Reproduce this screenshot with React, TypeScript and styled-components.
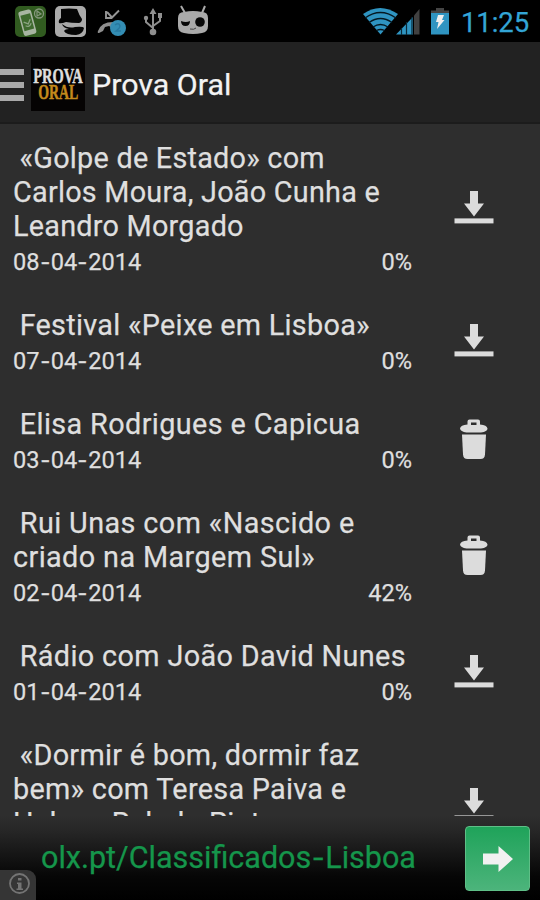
import React from "react";
import styled, { createGlobalStyle } from "styled-components";

const GlobalStyle = createGlobalStyle`
  * { box-sizing: border-box; }
  body { margin: 0; background: #000; font-family: Roboto, "Liberation Sans", sans-serif; }
`;

const Screen = styled.main`
  display: flex;
  flex-direction: column;
  width: 540px;
  height: 900px;
  overflow: hidden;
  background: #2e2e2e;
  -webkit-text-stroke: 0.25px currentColor;
`;

const StatusBar = styled.div`
  display: flex;
  flex: none;
  justify-content: space-between;
  height: 42px;
  background: #000;
  svg { display: block; flex: none; }
`;

const StatusRight = styled.div`
  display: flex;
`;

const Clock = styled.span`
  width: 79px;
  font-size: 27.5px;
  line-height: 46px;
  letter-spacing: -0.1px;
  color: #33a5d6;
  white-space: nowrap;
`;

const ActionBar = styled.header`
  display: flex;
  flex: none;
  align-items: center;
  height: 82px;
  background: #222;
  border-bottom: 2px solid #1c1c1c;
`;

const MenuBars = styled.div`
  display: flex;
  flex-direction: column;
  gap: 7px;
  width: 24px;
  margin-top: 6px;
`;

const MenuBar = styled.span`
  height: 6px;
  background: #a9a9a9;
`;

const Logo = styled.div`
  display: flex;
  flex-direction: column;
  align-items: center;
  justify-content: center;
  width: 54px;
  height: 54px;
  margin: 3px 7px 0 7px;
  background: #050303;
  font-family: "Liberation Serif", serif;
  font-weight: 700;
  line-height: 16px;
`;

const LogoWord = styled.span<{ $gold?: boolean }>`
  font-size: 21px;
  color: ${(p) => (p.$gold ? "#c48a1c" : "#dedede")};
  transform: scaleX(${(p) => (p.$gold ? 0.66 : 0.69)});
  -webkit-text-stroke-width: 0.5px;
  white-space: nowrap;
`;

const AppTitle = styled.h1`
  margin: 4px 0 0;
  font-size: 30.4px;
  font-weight: 400;
  color: #f3f3f3;
`;

const List = styled.ul`
  flex: none;
  height: 692px;
  margin: 0;
  padding: 0;
  overflow: hidden;
  list-style: none;
`;

const Row = styled.li`
  display: flex;
  align-items: center;
  justify-content: space-between;
  padding: 17px 45px 15px 13px;
  color: #dfdfdf;
`;

const Details = styled.div`
  width: 399px;
`;

const EpisodeTitle = styled.div<{ $tracking: number }>`
  font-size: 28.8px;
  line-height: 34px;
  letter-spacing: ${(p) => p.$tracking}px;
  text-indent: -0.8px;
  white-space: pre;
`;

const Meta = styled.div`
  display: flex;
  justify-content: space-between;
  margin-top: 5px;
  font-size: 23.6px;
  line-height: 28px;
`;

const Dash = styled.span<{ $wide?: boolean }>`
  display: inline-block;
  margin: 0 ${(p) => (p.$wide ? 2.8 : 2.3)}px;
  transform: scaleX(1.25);
`;

const IconButton = styled.button`
  display: block;
  width: 42px;
  height: 44px;
  margin-bottom: 2px;
  padding: 0;
  border: 0;
  background: none;
  svg { display: block; }
`;

const AdBanner = styled.footer`
  display: flex;
  position: relative;
  flex: none;
  align-items: flex-start;
  justify-content: space-between;
  height: 84px;
  padding: 10px 10px 0 41px;
  background: linear-gradient(#2e2e2e 0%, #252525 20%, #060606 72%, #000 100%);
`;

const AdText = styled.span`
  font-size: 30.5px;
  line-height: 64px;
  color: #15964b;
  white-space: nowrap;
`;

const AdButton = styled.button`
  display: flex;
  align-items: center;
  justify-content: center;
  width: 65px;
  height: 65px;
  padding: 0;
  border: 1.5px solid #5fbf87;
  border-radius: 4px;
  background: linear-gradient(#1fa35a, #4cb47b);
`;

const AdInfo = styled.div`
  position: absolute;
  left: 0;
  bottom: 0;
  width: 36px;
  height: 30px;
  border-radius: 0 9px 0 0;
  background: #353535;
`;

const DownloadIcon = () => (
  <svg width="42" height="44" viewBox="0 0 42 44">
    <path d="M17 5h8V17.500h6L21 30.500 11 17.500h6z" fill="#dcdcdc" />
    <rect x="1.500" y="32.400" width="39" height="5" fill="#dcdcdc" />
  </svg>
);

const TrashIcon = () => (
  <svg width="42" height="44" viewBox="0 0 42 44">
    <path
      fillRule="evenodd"
      d="M14.500 6.500V3.500q0-2 2-2h8.500q2 0 2 2v3q7 .7 7.500 4Q34.500 13.500 28 14.500H13.500q-6-1-6.500-4Q7.500 7.200 14.500 6.500zM18 4.500v2.500h5.500V4.500z"
      fill="#dcdcdc"
    />
    <path d="M9 16.500h24l-1 20q-.3 4.500-4.500 4.500h-13q-4.200 0-4.500-4.500z" fill="#dcdcdc" />
  </svg>
);

const NotificationIcons = () => (
  <svg width="220" height="42" viewBox="0 0 220 42">
    <rect x="15" y="6" width="31" height="31" rx="5" fill="#315b20" />
    <g transform="rotate(-15 28 23)">
      <rect x="21" y="10" width="13" height="25" rx="2.500" fill="#a8b5a2" />
      <rect x="22.500" y="14" width="10" height="16" fill="#3e6a2e" />
      <path d="M24 21l4 3 3-4M25 25q3 3 6-1" fill="none" stroke="#8ba482" strokeWidth="1.300" />
    </g>
    <circle cx="39" cy="13.500" r="4.500" fill="none" stroke="#84977b" strokeWidth="1.300" />
    <path d="M37 16v-5l4 3z" fill="none" stroke="#84977b" strokeWidth="1.200" />

    <rect x="55" y="6" width="31" height="31" rx="5" fill="#aaa" />
    <path d="M61 9q8-1 16 0 2 6 5 10 0 3-3 4-8 0-13-1-5 2-7 1-1-3 2-5 0-5 0-9z" fill="#050505" />
    <path d="M62 24q6 5 13 3 8-1 9 1-1 6-8 7-10 0-12-4 1-2 5-2-6-1-7-5z" fill="#050505" />

    <path d="M106 11v7h6M107 12l5 5.500 7-7" fill="none" stroke="#959595" strokeWidth="1.900" />
    <path d="M98 31q3-10 18-9l3 6-5 1-5-3-4 1-2 4-4 2q-2 0-1-2z" fill="#8e8e8e" />
    <circle cx="118" cy="28" r="8" fill="#338db3" />
    <path d="M115 25q4-3 5 1 0 2-4 5h5" fill="none" stroke="#2879a0" strokeWidth="1.400" />

    <g fill="none" stroke="#8f8f8f" strokeWidth="2">
      <path d="M153 12v21M146 18v4l7 6M160 16v5l-7 5" />
    </g>
    <path d="M153 8l3.500 6h-7zM158 13h4v5h-4z" fill="#8f8f8f" />
    <circle cx="146" cy="18" r="2.200" fill="#8f8f8f" />
    <circle cx="153" cy="32" r="3.300" fill="#8f8f8f" />

    <path d="M181 6l4 7M205 6l-3 7" stroke="#aaa" strokeWidth="2" />
    <path d="M184 12q9-2 18 0 6 0 6 6v8q0 6-6 7-9 2-18 0-6-1-6-7v-8q0-6 6-6z" fill="#aaa" />
    <path d="M181 21q5 2 9 0 0 5-4.500 5T181 21z" fill="#080808" />
    <circle cx="200" cy="22" r="4.800" fill="#080808" />
    <path d="M190 29q4 1 6-1" fill="none" stroke="#444" strokeWidth="1" />
  </svg>
);

const SystemIcons = () => (
  <svg width="100" height="42" viewBox="361 0 100 42">
    <path d="M380.500 34.500L363 14q17-12 35 0z" fill="#2f94c1" />
    <g fill="none" stroke="#051821" strokeWidth="1.300">
      <path d="M365 18q15.500-11 31 0M369 22.500q11.500-8 23 0M373 27q7.500-5 15 0M376.500 30.500q4-2 8 0" />
    </g>
    <path d="M396 34.500L413 17v17.500z" fill="#2f94c1" />
    <path d="M414 34.500V15.500L419.500 9v25.500z" fill="#414141" />
    <path d="M401.500 28v7M406.500 22v13M412 17v18" stroke="#092938" strokeWidth="1.200" />
    <path d="M431 10.500h5V8h8v2.500h5V14h-18z" fill="#454545" />
    <rect x="431" y="13" width="18" height="21.500" fill="#2f94c1" />
    <path d="M438 15h6l-2 5h2.500L437 29l1.500-7H436z" fill="#eee" />
  </svg>
);

const ArrowIcon = () => (
  <svg width="32" height="28" viewBox="0 0 32 28">
    <path d="M1 8.500h15.500V1L31 14 16.500 27v-7.500H1z" fill="#f1f1f1" />
  </svg>
);

const InfoIcon = () => (
  <svg width="36" height="30" viewBox="0 0 36 30">
    <circle cx="19.500" cy="13.500" r="9.500" fill="none" stroke="#747474" strokeWidth="1.800" />
    <path d="M18 8h3.500v2.500H18zM17 12.500h4.500v6H23v1.500h-6.500v-1.500H18V14h-1z" fill="#747474" />
  </svg>
);

type Episode = { title: string; date: string; progress: string; tracking: number; saved?: boolean };

const episodes: Episode[] = [
  { title: " «Golpe de Estado» com\nCarlos Moura, João Cunha e\nLeandro Morgado", date: "08-04-2014", progress: "0%", tracking: 0.24 },
  { title: " Festival «Peixe em Lisboa»", date: "07-04-2014", progress: "0%", tracking: 0.29 },
  { title: " Elisa Rodrigues e Capicua", date: "03-04-2014", progress: "0%", tracking: 0.39, saved: true },
  { title: " Rui Unas com «Nascido e\ncriado na Margem Sul»", date: "02-04-2014", progress: "42%", tracking: 0.4, saved: true },
  { title: " Rádio com João David Nunes", date: "01-04-2014", progress: "0%", tracking: 0.36 },
  { title: " «Dormir é bom, dormir faz\nbem» com Teresa Paiva e\nHelena Rebelo Pinto", date: "31-03-2014", progress: "0%", tracking: 0.29 },
];

const DateText = ({ value }: { value: string }) => {
  const [day, month, year] = value.split("-");
  return (
    <span>
      {day}<Dash>-</Dash>{month}<Dash>-</Dash>{year}
    </span>
  );
};

export default function App() {
  return (
    <Screen>
      <GlobalStyle />
      <StatusBar>
        <NotificationIcons />
        <StatusRight>
          <SystemIcons />
          <Clock>11:25</Clock>
        </StatusRight>
      </StatusBar>
      <ActionBar>
        <MenuBars>
          <MenuBar />
          <MenuBar />
          <MenuBar />
        </MenuBars>
        <Logo>
          <LogoWord>PROVA</LogoWord>
          <LogoWord $gold>ORAL</LogoWord>
        </Logo>
        <AppTitle>Prova Oral</AppTitle>
      </ActionBar>
      <List>
        {episodes.map((episode) => (
          <Row key={episode.date}>
            <Details>
              <EpisodeTitle $tracking={episode.tracking}>{episode.title}</EpisodeTitle>
              <Meta>
                <DateText value={episode.date} />
                <span>{episode.progress}</span>
              </Meta>
            </Details>
            <IconButton aria-label={episode.saved ? "Apagar" : "Descarregar"}>
              {episode.saved ? <TrashIcon /> : <DownloadIcon />}
            </IconButton>
          </Row>
        ))}
      </List>
      <AdBanner>
        <AdText>
          olx.pt/Classificados<Dash $wide>-</Dash>Lisboa
        </AdText>
        <AdButton aria-label="Abrir">
          <ArrowIcon />
        </AdButton>
        <AdInfo>
          <InfoIcon />
        </AdInfo>
      </AdBanner>
    </Screen>
  );
}
